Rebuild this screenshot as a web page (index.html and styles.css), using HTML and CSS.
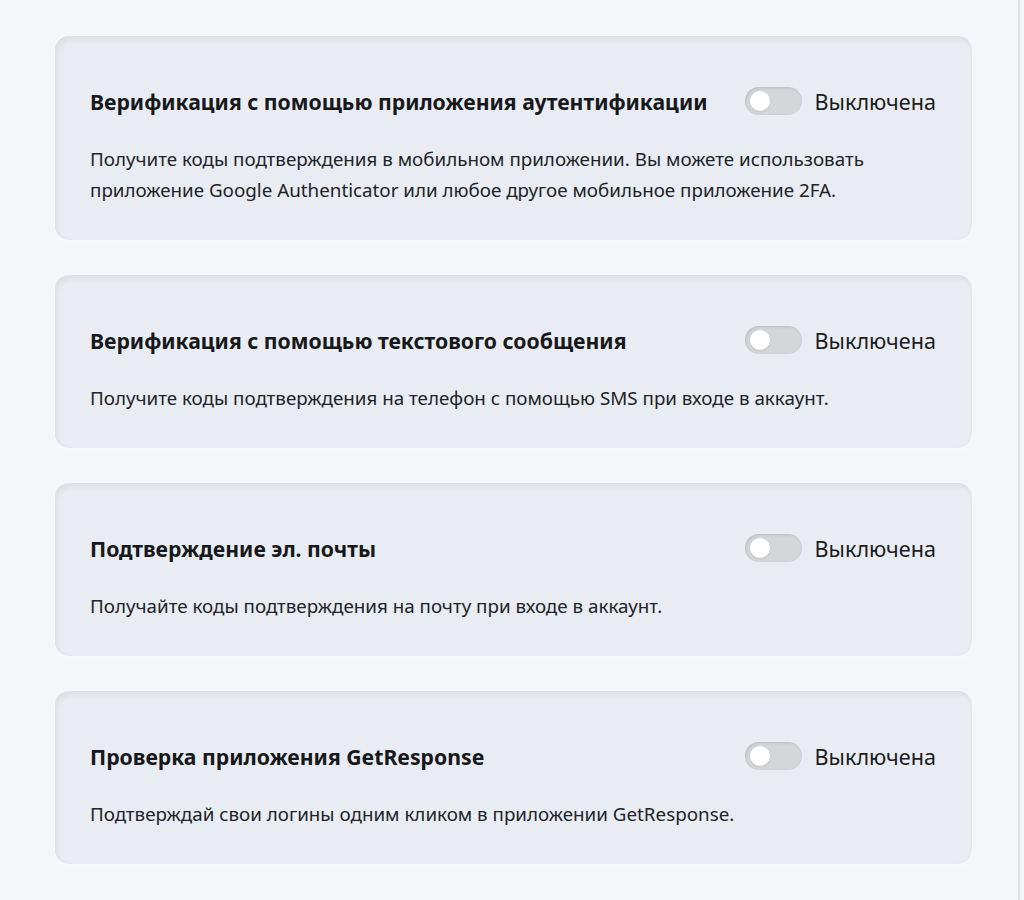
FILE: index.html
```html
<!DOCTYPE html>
<html lang="ru">
    <head>
        <meta charset="UTF-8">
        <meta name="viewport" content="width=device-width, initial-scale=1.0">
        <title>Двухэтапная проверка</title>
        <link rel="stylesheet" href="styles.css">
    </head>
    <body>
        <main class="page">
            <section class="card">
                <div class="card-head">
                    <h2 class="card-title">Верификация с помощью приложения аутентификации</h2>
                    <label class="switch">
                        <span class="switch-track"><span class="switch-knob"></span></span>
                        <span class="switch-label">Выключена</span>
                    </label>
                </div>
                <p class="card-text">Получите коды подтверждения в мобильном приложении. Вы можете использовать приложение Google Authenticator или любое другое мобильное приложение 2FA.</p>
            </section>

            <section class="card">
                <div class="card-head">
                    <h2 class="card-title">Верификация с помощью текстового сообщения</h2>
                    <label class="switch">
                        <span class="switch-track"><span class="switch-knob"></span></span>
                        <span class="switch-label">Выключена</span>
                    </label>
                </div>
                <p class="card-text">Получите коды подтверждения на телефон с помощью SMS при входе в аккаунт.</p>
            </section>

            <section class="card">
                <div class="card-head">
                    <h2 class="card-title">Подтверждение эл. почты</h2>
                    <label class="switch">
                        <span class="switch-track"><span class="switch-knob"></span></span>
                        <span class="switch-label">Выключена</span>
                    </label>
                </div>
                <p class="card-text">Получайте коды подтверждения на почту при входе в аккаунт.</p>
            </section>

            <section class="card">
                <div class="card-head">
                    <h2 class="card-title">Проверка приложения GetResponse</h2>
                    <label class="switch">
                        <span class="switch-track"><span class="switch-knob"></span></span>
                        <span class="switch-label">Выключена</span>
                    </label>
                </div>
                <p class="card-text">Подтверждай свои логины одним кликом в приложении GetResponse.</p>
            </section>
        </main>
    </body>
</html>
```

FILE: styles.css
```css
* {
    padding: 0;
    margin: 0;
    box-sizing: border-box;
}

body {
    background-color: #f1f3f6;
    font-family: "Noto Sans", "Open Sans", sans-serif;
    color: #16181b;
}

.page {
    width: 1020px;
    min-height: 900px;
    background-color: #f4f6fa;
    border-right: 2px solid #dcdfe3;
    padding: 36px 0 0 55px;
    display: flex;
    flex-direction: column;
    gap: 35px;
}

.card {
    width: 917px;
    background-color: #e9ecf2;
    border-radius: 14px;
    padding: 50px 36px 34px 35px;
    box-shadow: inset 2px 3px 6px rgba(40, 50, 70, 0.08), 0 1px 2px rgba(255, 255, 255, 0.8);
}

.card-head {
    display: flex;
    align-items: center;
    justify-content: space-between;
    height: 30px;
}

.card-title {
    font-size: 21.2px;
    font-weight: 700;
}

.switch {
    display: flex;
    align-items: center;
    gap: 13px;
}

.switch-track {
    width: 57px;
    height: 28px;
    border-radius: 14px;
    background-color: #d4d6da;
    box-shadow: inset 1px 1px 3px rgba(0, 0, 0, 0.12);
    display: flex;
    align-items: center;
    padding-left: 5px;
}

.switch-knob {
    width: 20px;
    height: 20px;
    border-radius: 50%;
    background-color: #fff;
    box-shadow: 0 1px 2px rgba(0, 0, 0, 0.1);
}

.switch-label {
    font-size: 21.6px;
    color: #1b1d20;
}

.card-text {
    margin-top: 28px;
    font-size: 18.8px;
    line-height: 31px;
    color: #202327;
}
```
